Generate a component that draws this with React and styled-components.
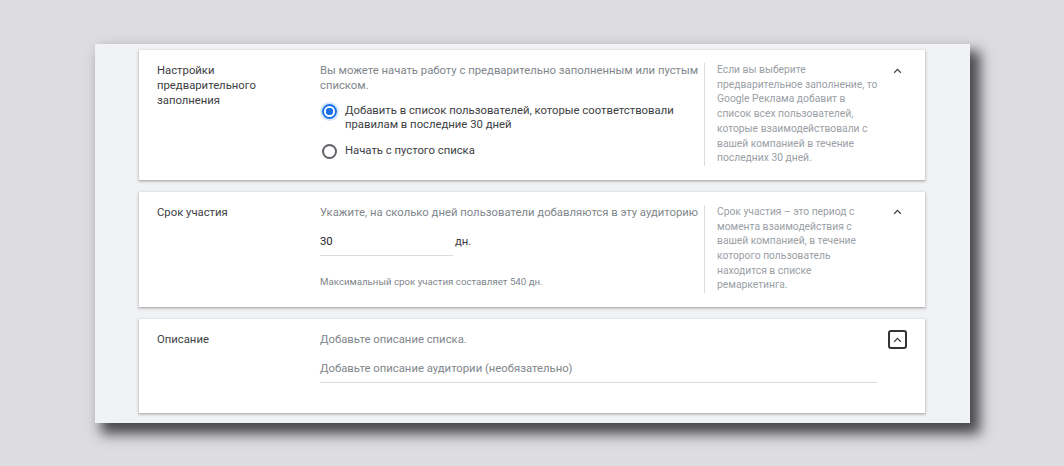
import React from "react";
import styled, { createGlobalStyle } from "styled-components";

const GlobalStyle = createGlobalStyle`
  html, body {
    margin: 0;
    padding: 0;
    background: #dddce1;
    font-family: Roboto, "Liberation Sans", Arial, sans-serif;
  }
`;

const ChevronUp = () => (
  <svg width="18" height="18" viewBox="0 0 24 24" fill="currentColor">
    <path d="M12 8l-6 6 1.41 1.41L12 10.83l4.59 4.58L18 14z" />
  </svg>
);

const App = () => {
  return (
    <StyledPage>
      <GlobalStyle />
      <StyledPanel>
        <StyledCard>
          <StyledLabel>
            Настройки
            <br />
            предварительного
            <br />
            заполнения
          </StyledLabel>
          <StyledContent>
            <StyledHint>
              Вы можете начать работу с предварительно заполненным или пустым
              списком.
            </StyledHint>
            <StyledRadios>
              <StyledRadioRow>
                <StyledRadio checked />
                <span>
                  Добавить в список пользователей, которые соответствовали
                  правилам в последние 30 дней
                </span>
              </StyledRadioRow>
              <StyledRadioRow>
                <StyledRadio />
                <span>Начать с пустого списка</span>
              </StyledRadioRow>
            </StyledRadios>
          </StyledContent>
          <StyledAside>
            Если вы выберите предварительное заполнение, то Google Реклама
            добавит в список всех пользователей, которые взаимодействовали с
            вашей компанией в течение последних 30 дней.
          </StyledAside>
          <StyledToggle>
            <ChevronUp />
          </StyledToggle>
        </StyledCard>

        <StyledCard>
          <StyledLabel>Срок участия</StyledLabel>
          <StyledContent>
            <StyledHint>
              Укажите, на сколько дней пользователи добавляются в эту аудиторию
            </StyledHint>
            <StyledDaysRow>
              <StyledField width="133px">30</StyledField>
              <span>дн.</span>
            </StyledDaysRow>
            <StyledNote>Максимальный срок участия составляет 540 дн.</StyledNote>
          </StyledContent>
          <StyledAside>
            Срок участия – это период с момента взаимодействия с вашей
            компанией, в течение которого пользователь находится в списке
            ремаркетинга.
          </StyledAside>
          <StyledToggle>
            <ChevronUp />
          </StyledToggle>
        </StyledCard>

        <StyledCard>
          <StyledLabel>Описание</StyledLabel>
          <StyledContent wide>
            <StyledHint>Добавьте описание списка.</StyledHint>
            <StyledField placeholder width="557px">
              Добавьте описание аудитории (необязательно)
            </StyledField>
          </StyledContent>
          <StyledToggle focused>
            <ChevronUp />
          </StyledToggle>
        </StyledCard>
      </StyledPanel>
    </StyledPage>
  );
};

const StyledPage = styled.div`
  height: 466px;
  padding: 44px 0 0 95px;
  box-sizing: border-box;
  overflow: hidden;
`;

const StyledPanel = styled.div`
  width: 875px;
  box-sizing: border-box;
  padding: 6px 45px 10px 44px;
  background: #f1f2f4;
  box-shadow: 8px 9px 12px 2px rgba(35, 35, 40, 0.8);
  display: flex;
  flex-direction: column;
  gap: 12px;
`;

const StyledCard = styled.div`
  background: #fff;
  box-shadow: 0 1px 2px rgba(60, 64, 67, 0.35), 0 1px 3px 1px rgba(60, 64, 67, 0.12);
  padding: 13px 18px 14px 18px;
  display: grid;
  grid-template-columns: 163px 384px 176px 1fr;
  align-items: start;
  font-size: 11.3px;
  line-height: 15px;
  color: #3c4043;
`;

const StyledLabel = styled.div`
  color: #3c4043;
`;

const StyledContent = styled.div`
  grid-column: ${(p) => (p.wide ? "2 / span 2" : "auto")};
  margin-right: -2px;
  display: flex;
  flex-direction: column;
`;

const StyledHint = styled.div`
  color: #80868b;
`;

const StyledRadios = styled.div`
  margin-top: 11px;
  display: flex;
  flex-direction: column;
  gap: 12px;
`;

const StyledRadioRow = styled.label`
  display: flex;
  align-items: flex-start;
  gap: 8px;
  line-height: 14px;
  color: #3c4043;
  padding-left: 2px;
  padding-right: 9px;
`;

const StyledRadio = styled.span`
  flex: none;
  width: 15px;
  height: 15px;
  box-sizing: border-box;
  border-radius: 50%;
  border: 2px solid ${(p) => (p.checked ? "#1a73e8" : "#5f6368")};
  background: ${(p) =>
    p.checked ? "radial-gradient(circle, #1a73e8 0 3.5px, #fff 4px)" : "#fff"};
  box-shadow: ${(p) => (p.checked ? "0 0 0 2px rgba(26,115,232,0.18)" : "none")};
`;

const StyledDaysRow = styled.div`
  margin-top: 12px;
  display: flex;
  align-items: flex-start;
  gap: 2px;
  color: #3c4043;

  span {
    padding-top: 2px;
  }
`;

const StyledField = styled.div`
  width: ${(p) => p.width};
  padding: 2px 0 6px;
  border-bottom: 1px solid #dadce0;
  color: ${(p) => (p.placeholder ? "#80868b" : "#202124")};
  margin-top: ${(p) => (p.placeholder ? "12px" : "0")};
  margin-bottom: ${(p) => (p.placeholder ? "16px" : "0")};
`;

const StyledNote = styled.div`
  margin-top: 19px;
  font-size: 9.7px;
  line-height: 13px;
  color: #80868b;
`;

const StyledAside = styled.div`
  border-left: 1px solid #dadce0;
  padding-left: 12px;
  font-size: 10.3px;
  line-height: 14.7px;
  color: #9aa0a6;
`;

const StyledToggle = styled.div`
  justify-self: end;
  width: 19px;
  height: 19px;
  box-sizing: border-box;
  margin-top: -2px;
  display: flex;
  align-items: center;
  justify-content: center;
  color: #3c4043;
  border: 2px solid ${(p) => (p.focused ? "#333" : "transparent")};
  border-radius: 3px;
`;

export default App;
